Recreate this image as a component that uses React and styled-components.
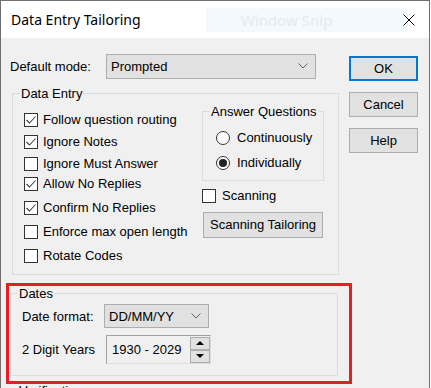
import React from 'react';
import styled, { createGlobalStyle } from 'styled-components';

const GlobalStyle = createGlobalStyle`
  html, body {
    margin: 0;
    padding: 0;
    height: 388px;
    overflow: hidden;
    background: #ffffff;
  }
  body {
    font-family: "Liberation Sans", Arial, sans-serif;
    font-size: 13px;
    color: #000;
  }
`;

const Window = styled.div`
  width: 430px;
  height: 430px;
  box-sizing: border-box;
  border: 1px solid #6f6f6f;
  border-bottom: none;
  background: #f0f0f0;
`;

const TitleBar = styled.div`
  position: relative;
  height: 37px;
  background: #fff;
  display: flex;
  align-items: center;
  padding-left: 10px;
`;

const Title = styled.span`
  font-family: "Noto Sans", "Open Sans", sans-serif;
  font-size: 14px;
  color: #000;
`;

const SnipBadge = styled.div`
  position: absolute;
  left: 205px;
  top: 7px;
  width: 202px;
  height: 24px;
  background: #f3f9fd;
  display: flex;
  align-items: center;
  padding-left: 35px;
  box-sizing: border-box;
  font-family: "Noto Sans", "Open Sans", sans-serif;
  font-size: 15px;
  color: #e6eaee;
`;

const CloseButton = styled.div`
  position: relative;
  margin-left: auto;
  margin-right: 14px;
  width: 12px;
  height: 12px;
  display: flex;
`;

const TopArea = styled.div`
  display: flex;
  height: 237px;
`;

const LeftCol = styled.div`
  width: 338px;
  box-sizing: border-box;
  padding-left: 9px;
  display: flex;
  flex-direction: column;
`;

const FieldRow = styled.div`
  display: flex;
  align-items: center;
  height: ${(p) => p.h}px;
  margin-top: ${(p) => p.mt}px;
  padding-left: ${(p) => p.pl || 0}px;
`;

const FieldLabel = styled.span`
  width: ${(p) => p.w}px;
  flex-shrink: 0;
`;

const Combo = styled.div`
  width: ${(p) => p.w}px;
  height: 100%;
  box-sizing: border-box;
  background: #e1e1e1;
  border: 1px solid #adadad;
  display: flex;
  align-items: center;
  justify-content: space-between;
  padding: 0 7px 0 4px;
`;

const GroupBox = styled.div`
  position: relative;
  box-sizing: border-box;
  width: ${(p) => p.w}px;
  height: ${(p) => p.h}px;
  margin-top: ${(p) => p.mt || 0}px;
  margin-left: ${(p) => p.ml || 0}px;
  border: 1px solid #dcdcdc;
  display: ${(p) => (p.row ? 'flex' : 'block')};
`;

const Caption = styled.span`
  position: absolute;
  top: -8px;
  left: 7px;
  padding: 0 1px;
  line-height: 15px;
  background: #f0f0f0;
`;

const CheckColumn = styled.div`
  width: 189px;
  box-sizing: border-box;
  padding: 16px 0 0 11px;
  display: flex;
  flex-direction: column;
`;

const CheckRow = styled.div`
  display: flex;
  align-items: center;
  gap: ${(p) => p.gap || 5}px;
  height: 20px;
  margin-top: ${(p) => p.mt || 0}px;
  margin-left: ${(p) => p.ml || 0}px;
`;

const Box = styled.span`
  width: 14px;
  height: 14px;
  box-sizing: border-box;
  border: 1px solid #333;
  background: #fff;
  display: flex;
  align-items: center;
  justify-content: center;
  flex-shrink: 0;
`;

const RightPart = styled.div`
  display: flex;
  flex-direction: column;
  padding-top: 17px;
`;

const RadioList = styled.div`
  padding: 16px 0 0 13px;
  display: flex;
  flex-direction: column;
`;

const RadioCircle = styled.span`
  width: 14px;
  height: 14px;
  box-sizing: border-box;
  border-radius: 50%;
  border: 1px solid #333;
  background: #fff;
  display: flex;
  align-items: center;
  justify-content: center;
  flex-shrink: 0;

  &::after {
    content: '';
    width: 8px;
    height: 8px;
    border-radius: 50%;
    background: ${(p) => (p.on ? '#222' : 'transparent')};
  }
`;

const Button = styled.div`
  width: ${(p) => p.w}px;
  height: ${(p) => p.h || 25}px;
  margin-top: ${(p) => p.mt || 0}px;
  margin-left: ${(p) => p.ml || 0}px;
  box-sizing: border-box;
  background: #e1e1e1;
  border: ${(p) => (p.primary ? '2px solid #0078d7' : '1px solid #adadad')};
  display: flex;
  align-items: center;
  justify-content: center;
`;

const ButtonCol = styled.div`
  margin-left: 10px;
  padding-top: 18px;
  display: flex;
  flex-direction: column;
  gap: 11px;
`;

const Highlight = styled.div`
  position: relative;
  z-index: 1;
  width: 346px;
  height: 101px;
  margin: 8px 0 0 5px;
  box-sizing: border-box;
  border: 3px solid #ea1c24;
`;

const SpinEdit = styled.div`
  width: ${(p) => p.w}px;
  height: 100%;
  box-sizing: border-box;
  border: 1px solid #dcdcdc;
  border-top-color: #a0a0a0;
  border-left-color: #a0a0a0;
  background: #f0f0f0;
  display: flex;
  align-items: center;
  justify-content: space-between;
  padding-left: 5px;
`;

const SpinButtons = styled.div`
  display: flex;
  flex-direction: column;
`;

const SpinBtn = styled.span`
  width: 20px;
  height: 13px;
  box-sizing: border-box;
  background: #e1e1e1;
  border: 1px solid #adadad;
  display: flex;
  align-items: center;
  justify-content: center;

  &::after {
    content: '';
    border-left: 4px solid transparent;
    border-right: 4px solid transparent;
    ${(p) => (p.down ? 'border-top: 4px solid #000;' : 'border-bottom: 4px solid #000;')}
  }
`;

const Chevron = () => (
  <svg width="10" height="6" viewBox="0 0 10 6">
    <polyline points="0.5,0.5 5,5 9.5,0.5" fill="none" stroke="#606060" strokeWidth="1" />
  </svg>
);

const Check = () => (
  <svg width="12" height="12" viewBox="0 0 12 12">
    <polyline points="1.5,6 4.5,9 10.5,2.5" fill="none" stroke="#444" strokeWidth="1.1" />
  </svg>
);

const CheckItem = ({ label, checked, mt, gap, ml }) => (
  <CheckRow mt={mt} gap={gap} ml={ml}>
    <Box>{checked && <Check />}</Box>
    <span>{label}</span>
  </CheckRow>
);

const checks = [
  { label: 'Follow question routing', checked: true, mt: 0 },
  { label: 'Ignore Notes', checked: true, mt: 2 },
  { label: 'Ignore Must Answer', checked: false, mt: 2 },
  { label: 'Allow No Replies', checked: true, mt: 0 },
  { label: 'Confirm No Replies', checked: true, mt: 4 },
  { label: 'Enforce max open length', checked: false, mt: 4 },
  { label: 'Rotate Codes', checked: false, mt: 4 },
];

export default function App() {
  return (
    <>
      <GlobalStyle />
      <Window>
        <TitleBar>
          <Title>Data Entry Tailoring</Title>
          <SnipBadge>Window Snip</SnipBadge>
          <CloseButton>
            <svg width="12" height="12" viewBox="0 0 12 12">
              <path d="M0.5 0.5 L11.5 11.5 M11.5 0.5 L0.5 11.5" stroke="#000" strokeWidth="1" />
            </svg>
          </CloseButton>
        </TitleBar>

        <TopArea>
          <LeftCol>
            <FieldRow h={25} mt={16}>
              <FieldLabel w={96}>Default mode:</FieldLabel>
              <Combo w={210}>
                <span>Prompted</span>
                <Chevron />
              </Combo>
            </FieldRow>

            <GroupBox w={327} h={183} mt={14} ml={2} row>
              <Caption>Data Entry</Caption>
              <CheckColumn>
                {checks.map((c) => (
                  <CheckItem key={c.label} {...c} />
                ))}
              </CheckColumn>
              <RightPart>
                <GroupBox w={122} h={70}>
                  <Caption>Answer Questions</Caption>
                  <RadioList>
                    <CheckRow gap={7}>
                      <RadioCircle />
                      <span>Continuously</span>
                    </CheckRow>
                    <CheckRow gap={7} mt={5}>
                      <RadioCircle on />
                      <span>Individually</span>
                    </CheckRow>
                  </RadioList>
                </GroupBox>
                <CheckItem label="Scanning" mt={5} gap={6} />
                <Button w={120} h={26} mt={6} ml={1}>Scanning Tailoring</Button>
              </RightPart>
            </GroupBox>
          </LeftCol>

          <ButtonCol>
            <Button w={69} primary>OK</Button>
            <Button w={69}>Cancel</Button>
            <Button w={69}>Help</Button>
          </ButtonCol>
        </TopArea>

        <Highlight>
          <GroupBox w={328} h={83} mt={7} ml={1}>
            <Caption>Dates</Caption>
            <FieldRow h={24} mt={10} pl={11}>
              <FieldLabel w={82}>Date format:</FieldLabel>
              <Combo w={105}>
                <span>DD/MM/YY</span>
                <Chevron />
              </Combo>
            </FieldRow>
            <FieldRow h={29} mt={7} pl={11}>
              <FieldLabel w={84}>2 Digit Years</FieldLabel>
              <SpinEdit w={105}>
                <span>1930 - 2029</span>
                <SpinButtons>
                  <SpinBtn />
                  <SpinBtn down />
                </SpinButtons>
              </SpinEdit>
            </FieldRow>
          </GroupBox>
        </Highlight>

        <GroupBox w={328} h={60} mt={6} ml={9}>
          <Caption>Verification</Caption>
        </GroupBox>
      </Window>
    </>
  );
}
